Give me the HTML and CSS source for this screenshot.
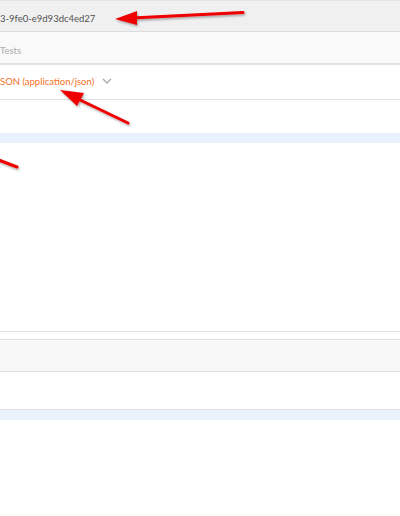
FILE: index.html
```html
<!DOCTYPE html>
<html>
<head>
<meta charset="utf-8">
<link rel="stylesheet" href="styles.css">
</head>
<body>
<div class="page">
  <div class="urlbar"><span class="url">3-9fe0-e9d93dc4ed27</span></div>
  <div class="tabs"><span class="tab">Tests</span></div>
  <div class="typerow">
    <span class="type">SON (application/json)</span>
    <svg class="chev" width="10" height="6" viewBox="0 0 10 6"><path d="M1 1 L5 5 L9 1" fill="none" stroke="#a8a8a8" stroke-width="1.3"/></svg>
  </div>
  <div class="blank1"></div>
  <div class="strip"></div>
  <div class="editor"></div>
  <div class="gap"></div>
  <div class="tabs2"></div>
  <div class="blank2"></div>
  <div class="strip"></div>
  <div class="rest"></div>

  <svg class="arrows" width="400" height="516" viewBox="0 0 400 516">
    <defs>
      <filter id="sh" x="-20%" y="-50%" width="140%" height="200%">
        <feDropShadow dx="1" dy="1.5" stdDeviation="1" flood-color="#000" flood-opacity="0.35"/>
      </filter>
    </defs>
    <g filter="url(#sh)" fill="#ee0000" stroke="#ee0000">
      <line x1="243" y1="12.5" x2="132" y2="18" stroke-width="3" stroke-linecap="round"/>
      <polygon points="115,19 137,11 137,25" stroke="none"/>
      <line x1="128" y1="123" x2="76" y2="98" stroke-width="3" stroke-linecap="round"/>
      <polygon points="60,90 84,93 77,106" stroke="none"/>
      <line x1="-4" y1="159" x2="17" y2="167" stroke-width="3" stroke-linecap="round"/>
    </g>
  </svg>
</div>
</body>
</html>
```
FILE: styles.css
```css
* { box-sizing: border-box; }
html, body { margin: 0; padding: 0; background: #fff; }
body { font-family: "Lato", "Open Sans", sans-serif; font-size: 9.5px; }
.page { position: relative; width: 400px; height: 516px; overflow: hidden; display: flex; flex-direction: column; }
.urlbar { height: 32px; background: #f0f0f0; border-top: 1px solid #e4e4e4; border-bottom: 1px solid #dcdcdc; display: flex; align-items: center; }
.url { color: #505050; margin-top: 4px; }
.tabs { height: 33px; background: #f9f9f9; border-bottom: 2px solid #e2e2e2; display: flex; align-items: center; }
.tab { color: #ababab; margin-top: 5px; }
.typerow { height: 35px; background: #fff; border-bottom: 1px solid #e0e0e0; display: flex; align-items: center; gap: 8px; }
.type { color: #f47023; margin-top: -2px; }
.chev { margin-top: -3px; }
.blank1 { height: 33px; }
.strip { height: 10px; background: #e8f1fc; flex: none; }
.editor { height: 189px; border-bottom: 1px solid #e0e0e0; }
.gap { height: 8px; border-bottom: 1px solid #e0e0e0; }
.tabs2 { height: 32px; background: #f8f8f8; border-bottom: 1px solid #e0e0e0; }
.blank2 { height: 38px; border-bottom: 1px solid #e0e0e0; }
.rest { flex: 1; }
.arrows { position: absolute; left: 0; top: 0; pointer-events: none; }
```
